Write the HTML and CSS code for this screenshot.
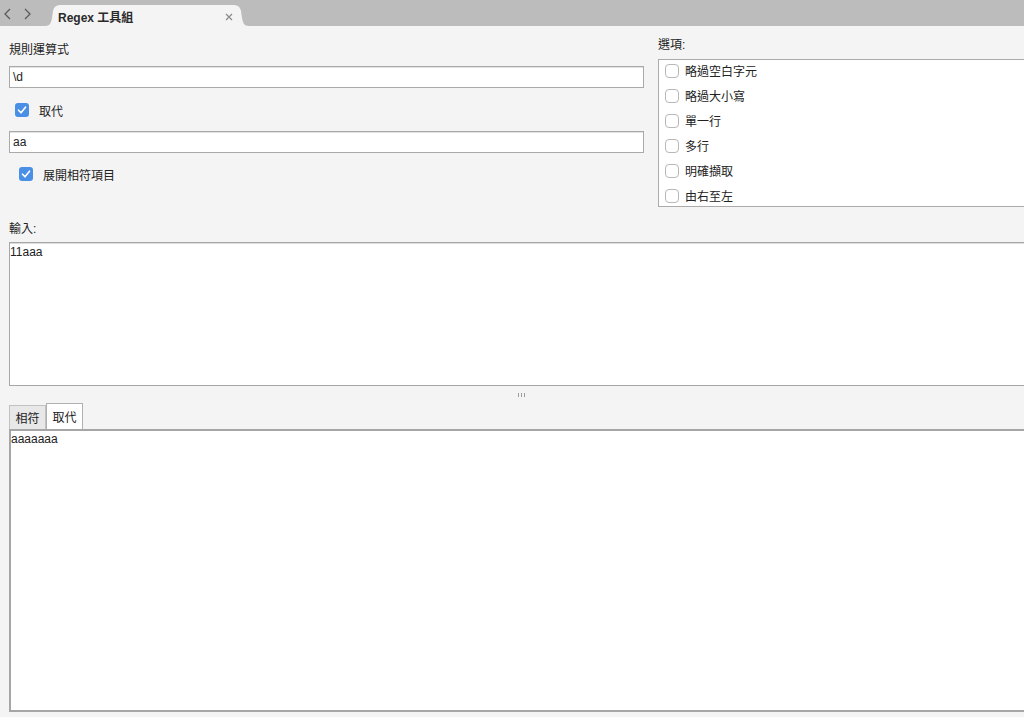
FILE: index.html
```html
<!DOCTYPE html>
<html lang="zh-Hant">
<head>
    <meta charset="UTF-8">
    <meta name="viewport" content="width=device-width, initial-scale=1.0">
    <title>Regex 工具組</title>
    <link rel="stylesheet" href="styles.css">
</head>
<body>
  <div class="tabbar">
    <div class="nav">
      <svg width="10" height="12" viewBox="0 0 10 12"><polyline points="7,1 2,6 7,11" fill="none" stroke="#5a5a5a" stroke-width="1.3"/></svg>
      <svg width="10" height="12" viewBox="0 0 10 12"><polyline points="3,1 8,6 3,11" fill="none" stroke="#5a5a5a" stroke-width="1.3"/></svg>
    </div>
    <div class="tab">
      <span class="tabtitle">Regex 工具組</span>
      <svg class="tabclose" width="8" height="8" viewBox="0 0 8 8"><path d="M1 1L7 7M7 1L1 7" stroke="#8a8a8a" stroke-width="1.2"/></svg>
    </div>
  </div>

  <div class="main">
    <div class="top">
      <div class="leftcol">
        <div class="label">規則運算式</div>
        <div class="field">\d</div>
        <label class="check first">
          <span class="box on"><svg width="14" height="14" viewBox="0 0 14 14"><polyline points="3.5,7.2 6,9.8 10.5,4.2" fill="none" stroke="#fff" stroke-width="1.6" stroke-linecap="round" stroke-linejoin="round"/></svg></span>
          取代
        </label>
        <div class="field second">aa</div>
        <label class="check expand">
          <span class="box on"><svg width="14" height="14" viewBox="0 0 14 14"><polyline points="3.5,7.2 6,9.8 10.5,4.2" fill="none" stroke="#fff" stroke-width="1.6" stroke-linecap="round" stroke-linejoin="round"/></svg></span>
          展開相符項目
        </label>
      </div>
      <div class="rightcol">
        <div class="label">選項:</div>
        <div class="options">
          <label class="opt"><span class="box"></span>略過空白字元</label>
          <label class="opt"><span class="box"></span>略過大小寫</label>
          <label class="opt"><span class="box"></span>單一行</label>
          <label class="opt"><span class="box"></span>多行</label>
          <label class="opt"><span class="box"></span>明確擷取</label>
          <label class="opt"><span class="box"></span>由右至左</label>
        </div>
      </div>
    </div>

    <div class="label inputlabel">輸入:</div>
    <div class="inputbox">11aaa</div>

    <div class="splitter"><span></span><span></span><span></span></div>

    <div class="tabs">
      <div class="restab">相符</div>
      <div class="restab active">取代</div>
    </div>
    <div class="output">aaaaaaa</div>
  </div>
</body>
</html>
```

FILE: styles.css
```css
html,body{
  margin: 0;
  height: 100%;
  overflow: hidden;
  background: #f4f4f4;
  font-family: "Liberation Sans", "Noto Sans CJK TC", sans-serif;
  font-size: 12px;
  color: #222;
}
.tabbar{
  height: 26px;
  background: #bcbcbc;
  display: flex;
  align-items: flex-end;
}
.nav{
  display: flex;
  gap: 9px;
  padding: 0 0 6px 3px;
  width: 45px;
  flex-shrink: 0;
  box-sizing: border-box;
}
.tab{
  width: 204px;
  height: 21px;
  flex-shrink: 0;
  background: #f4f4f4;
  clip-path: path('M0,21 C5,21 6,18 7,13 L8,6 C9,2 11,0 16,0 L188,0 C193,0 195,2 196,6 L197,13 C198,18 199,21 204,21 Z');
  display: flex;
  align-items: center;
  padding: 0 14px 0 13px;
  box-sizing: border-box;
  justify-content: space-between;
}
.tabtitle{
  font-weight: bold;
  font-size: 12px;
  color: #2a2a2a;
  padding-top: 1px;
}
.tabclose{
  margin-top: 2px;
  margin-right: 2px;
}
.main{
  width: 1040px;
  padding-left: 9px;
}
.top{
  display: flex;
  gap: 14px;
  height: 181px;
}
.leftcol{
  width: 635px;
  padding-top: 16px;
}
.rightcol{
  flex: 1;
  padding-top: 11px;
}
.label{
  height: 16px;
  line-height: 16px;
}
.field{
  margin-top: 8px;
  height: 22px;
  box-sizing: border-box;
  border: 1px solid #a9a9a9;
  box-shadow: inset 0 1px 0 #e2e2e2;
  background: #fff;
  line-height: 20px;
  padding-left: 3px;
}
.field.second{
  margin-top: 11px;
}
.check{
  display: flex;
  align-items: center;
  gap: 10px;
  height: 20px;
  margin-top: 12px;
  padding-left: 6px;
}
.check.expand{
  margin-top: 11px;
  padding-left: 10px;
}
.box{
  width: 14px;
  height: 14px;
  box-sizing: border-box;
  border: 1px solid #b8b8b8;
  border-radius: 4px;
  background: #fff;
  display: inline-flex;
  flex-shrink: 0;
}
.box.on{
  border: none;
  border-radius: 3px;
  background: #4a8fe6;
}
.options{
  margin-top: 6px;
  height: 148px;
  box-sizing: border-box;
  border: 1px solid #ababab;
  background: #fff;
  display: flex;
  flex-direction: column;
  gap: 4px;
}
.opt{
  height: 21px;
  display: flex;
  align-items: center;
  gap: 6px;
  padding-left: 6px;
}
.inputlabel{
  margin-top: 14px;
}
.inputbox{
  margin-top: 5px;
  height: 144px;
  box-sizing: border-box;
  border: 1px solid #a6a6a6;
  box-shadow: inset 0 1px 0 #dcdcdc;
  background: #fff;
  padding: 1px 0 0 0;
  line-height: 16px;
}
.splitter{
  height: 17px;
  display: flex;
  justify-content: center;
  align-items: center;
  gap: 2px;
  padding-right: 16px;
}
.splitter span{
  width: 1px;
  height: 4px;
  background: #9c9c9c;
}
.tabs{
  display: flex;
  align-items: flex-end;
  height: 26px;
}
.restab{
  width: 37px;
  height: 24px;
  box-sizing: border-box;
  border: 1px solid #c2c2c2;
  border-bottom: none;
  background: #e8e8e8;
  display: flex;
  justify-content: center;
  align-items: center;
}
.restab.active{
  height: 26px;
  background: #fff;
  border-color: #b0b0b0;
}
.output{
  height: 283px;
  box-sizing: border-box;
  border: 2px solid #a6a6a6;
  border-right: none;
  background: #fff;
  line-height: 16px;
}
```
